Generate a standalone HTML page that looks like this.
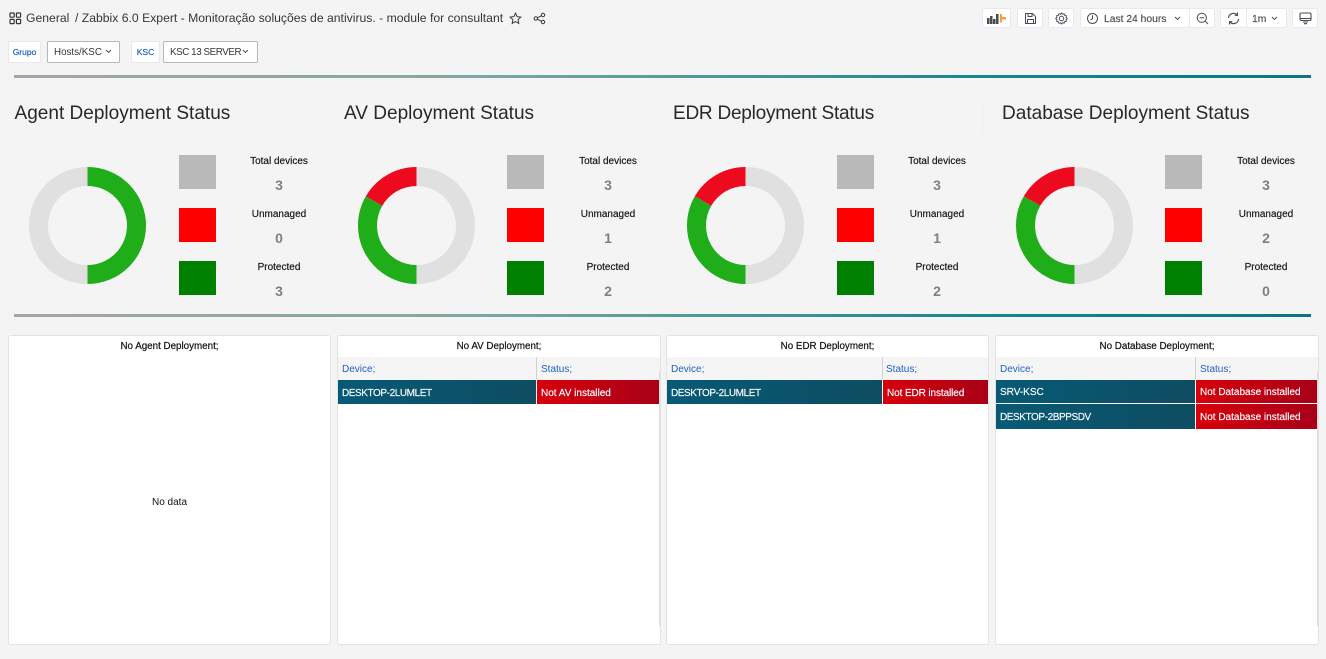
<!DOCTYPE html>
<html><head><meta charset="utf-8">
<style>
html,body{margin:0;padding:0;width:1326px;height:659px;overflow:hidden;background:#f4f4f4;font-family:"Liberation Sans",sans-serif;color:#24292e}
.a{position:absolute;white-space:nowrap}
.c{position:absolute;white-space:nowrap;text-align:center;transform:translateX(-50%)}
.btn{position:absolute;top:8px;height:20px;background:#fff;border:1px solid #e8e9ea;box-sizing:border-box;border-radius:2px}
.line{position:absolute;left:14px;width:1297px;height:3px;background:linear-gradient(90deg,#a6a6a6 0%,#7fa8a2 35%,#16858f 75%,#0a7588 100%)}
.title{position:absolute;top:102px;font-size:19.05px;line-height:24px;color:#24292e;white-space:nowrap}
.sq{position:absolute;width:37px;height:34px}
.lb{font-size:10px;line-height:12px;color:#111;-webkit-text-stroke:.15px #111}
.vl{font-size:14px;line-height:16px;font-weight:bold;color:#808080}
.card{position:absolute;top:335px;height:310px;background:#fff;border:1px solid #e2e3e4;box-sizing:border-box;border-radius:3px;overflow:hidden}
.ct{position:absolute;left:0;right:0;top:4px;text-align:center;font-size:9.8px;line-height:12px;color:#111;-webkit-text-stroke:.2px #111;padding-top:1px}
.hd{position:absolute;left:0;right:0;top:21px;height:23px;background:#f5f5f5}
.hdt{position:absolute;top:28px;font-size:10px;line-height:12px;color:#1f60c4}
.d{position:absolute;background:linear-gradient(90deg,#075a76,#0e4c61)}
.s{position:absolute;background:linear-gradient(90deg,#d6000c,#a80018)}
.t{position:absolute;font-size:10px;line-height:12px;color:#fff;white-space:nowrap;-webkit-text-stroke:.15px #fff}
.n{letter-spacing:-.42px}
.chip{position:absolute;top:41px;height:22px;background:#fff;border:1px solid #e8e9ea;box-sizing:border-box;text-align:center;font-size:8.5px;line-height:21px;color:#1f60c4;-webkit-text-stroke:.2px #1f60c4}
.sel{position:absolute;top:41px;height:22px;background:#fff;border:1px solid #b5b7ba;box-sizing:border-box;border-radius:2px;font-size:9.8px;line-height:21px;color:#33373b;padding-left:6px;white-space:nowrap}
.sb{position:absolute;width:1px;background:#dcdcdc}
</style></head><body>

<svg class="a" style="left:9px;top:12px" width="13" height="13" viewBox="0 0 13 13" fill="none" stroke="#33373b" stroke-width="1.2"><rect x="1" y="1" width="4.2" height="4.2" rx=".6"/><rect x="7.4" y="1" width="4.2" height="4.2" rx=".6"/><rect x="1" y="7.4" width="4.2" height="4.2" rx=".6"/><rect x="7.4" y="7.4" width="4.2" height="4.2" rx=".6"/></svg>
<div class="a" style="left:26px;top:11px;font-size:12.2px;line-height:15px;color:#33373b">General</div>
<div class="a" style="left:75px;top:11px;font-size:12.2px;line-height:15px;color:#33373b">/ Zabbix 6.0 Expert - Monitoração soluções de antivirus. - module for consultant</div>
<svg class="a" style="left:509px;top:12px" width="13" height="13" viewBox="0 0 13 13" fill="none" stroke="#33373b" stroke-width="1"><path d="M6.5 1.2l1.6 3.4 3.7.5-2.7 2.6.7 3.7-3.3-1.8-3.3 1.8.7-3.7L1.2 5.1l3.7-.5z"/></svg>
<svg class="a" style="left:533px;top:12px" width="13" height="13" viewBox="0 0 13 13" fill="none" stroke="#33373b" stroke-width="1"><circle cx="2.8" cy="6.5" r="1.7"/><circle cx="10" cy="3" r="1.7"/><circle cx="10" cy="10" r="1.7"/><path d="M4.4 5.7L8.4 3.8M4.4 7.3l4 1.9"/></svg>

<div class="chip" style="left:8px;width:33px">Grupo</div>
<div class="sel" style="left:47px;width:73px">Hosts/KSC</div>
<svg class="a" style="left:105px;top:49px" width="7" height="5" fill="none" stroke="#44484c" stroke-width=".9"><path d="M1 1l2.5 2.5L6 1"/></svg>
<div class="chip" style="left:131px;width:29px">KSC</div>
<div class="sel" style="left:163px;width:95px;letter-spacing:-.42px">KSC 13 SERVER</div>
<svg class="a" style="left:242px;top:49px" width="7" height="5" fill="none" stroke="#44484c" stroke-width=".9"><path d="M1 1l2.5 2.5L6 1"/></svg>

<div class="btn" style="left:982px;width:29px"></div>
<svg class="a" style="left:987px;top:12px" width="20" height="13"><g fill="#464c54"><rect x="0" y="6" width="2.5" height="6"/><rect x="3" y="4" width="2.5" height="8"/><rect x="6" y="7" width="2.5" height="5"/><rect x="9" y="2" width="2.5" height="10"/></g><path d="M13 2h2v3h4v2.500h-4v3h-2z" fill="#f5a142"/></svg>
<div class="btn" style="left:1017px;width:26px"></div>
<svg class="a" style="left:1024px;top:12px" width="13" height="13" fill="none" stroke="#464c54" stroke-width="1"><path d="M1.500 1.500h7l3 3v7h-10z"/><path d="M4 1.500v3h4v-3M3.500 11.500v-4h6v4"/></svg>
<div class="btn" style="left:1048px;width:26px"></div>
<svg class="a" style="left:1055px;top:12px" width="13" height="13" fill="none" stroke="#464c54" stroke-width="1"><circle cx="6.500" cy="6.500" r="2.200"/><path d="M6.500 1l1 1.200 1.600-.4.600 1.500 1.600.4-.2 1.600 1.200 1.200-1.200 1.200.2 1.600-1.600.4-.6 1.500-1.600-.4-1 1.200-1-1.200-1.600.4-.6-1.500-1.600-.4.2-1.600L.7 6.500l1.200-1.200-.2-1.600 1.600-.4.6-1.500 1.600.4z"/></svg>
<div class="btn" style="left:1080px;width:110px"></div>
<svg class="a" style="left:1086px;top:12px" width="13" height="13" fill="none" stroke="#464c54" stroke-width="1"><circle cx="6.500" cy="6.500" r="5"/><path d="M6.500 3.200v3.500l-2 1.300"/></svg>
<div class="a" style="left:1104px;top:13px;font-size:10.3px;line-height:13px;color:#464c54;-webkit-text-stroke:.15px #464c54">Last 24 hours</div>
<svg class="a" style="left:1174px;top:16px" width="7" height="5" fill="none" stroke="#464c54" stroke-width=".9"><path d="M1 1l2.500 2.500L6 1"/></svg>
<div class="btn" style="left:1189px;width:26px"></div>
<svg class="a" style="left:1196px;top:12px" width="13" height="13" fill="none" stroke="#464c54" stroke-width="1"><circle cx="5.800" cy="5.800" r="4.600"/><path d="M3.600 5.800h4.400M9.200 9.200l2.800 2.800"/></svg>
<div class="btn" style="left:1220px;width:27px"></div>
<svg class="a" style="left:1227px;top:12px" width="13" height="13" fill="none" stroke="#464c54" stroke-width="1.100"><path d="M1.500 6A5 5 0 0 1 10 2.800M11.500 7A5 5 0 0 1 3 10.200"/><path d="M10.500 .5v2.800H7.700M2.500 12.500V9.700h2.800"/></svg>
<div class="btn" style="left:1246px;width:41px"></div>
<div class="a" style="left:1252px;top:13px;font-size:10.3px;line-height:13px;color:#464c54;-webkit-text-stroke:.15px #464c54">1m</div>
<svg class="a" style="left:1271px;top:16px" width="7" height="5" fill="none" stroke="#464c54" stroke-width=".9"><path d="M1 1l2.500 2.500L6 1"/></svg>
<div class="btn" style="left:1292px;width:26px"></div>
<svg class="a" style="left:1299px;top:12px" width="13" height="13" fill="none" stroke="#464c54" stroke-width="1.100"><rect x="1" y="1" width="11" height="7.500" rx="1.200"/><path d="M1.200 6.500h10.600M4 10h5M5 11.700h3"/></svg>

<div class="line" style="top:75px"></div>
<div class="line" style="top:314px"></div>
<div class="a" style="left:982px;top:104px;width:1px;height:30px;background:#ebecec"></div>

<div class="title" style="left:14.5px">Agent Deployment Status</div>
<div class="title" style="left:344px">AV Deployment Status</div>
<div class="title" style="left:673px;letter-spacing:-.25px">EDR Deployment Status</div>
<div class="title" style="left:1002px">Database Deployment Status</div>

<svg class="a" style="left:0;top:0" width="1326" height="659" fill="none" stroke-width="19">
<g transform="translate(87.5,225.5)"><path d="M0 49A49 49 0 0 1 0 -49" stroke="#e0e0e0"/><path d="M0 -49A49 49 0 0 1 0 49" stroke="#1fad19"/></g>
<g transform="translate(416.5,225.5)"><path d="M0 -49A49 49 0 0 1 0 49" stroke="#e0e0e0"/><path d="M0 49A49 49 0 0 1 -42.44 -24.5" stroke="#1fad19"/><path d="M-42.44 -24.5A49 49 0 0 1 0 -49" stroke="#ee0a1e"/></g>
<g transform="translate(745.5,225.5)"><path d="M0 -49A49 49 0 0 1 0 49" stroke="#e0e0e0"/><path d="M0 49A49 49 0 0 1 -42.44 -24.5" stroke="#1fad19"/><path d="M-42.44 -24.5A49 49 0 0 1 0 -49" stroke="#ee0a1e"/></g>
<g transform="translate(1074.5,225.5)"><path d="M0 -49A49 49 0 0 1 0 49" stroke="#e0e0e0"/><path d="M0 49A49 49 0 0 1 -42.44 -24.5" stroke="#1fad19"/><path d="M-42.44 -24.5A49 49 0 0 1 0 -49" stroke="#ee0a1e"/></g>
</svg>

<div class="sq" style="left:179px;top:155px;background:#b9b9b9"></div>
<div class="sq" style="left:179px;top:208px;background:#ff0000"></div>
<div class="sq" style="left:179px;top:261px;background:#008000"></div>
<div class="c lb" style="left:279px;top:156px">Total devices</div><div class="c vl" style="left:279px;top:177px">3</div>
<div class="c lb" style="left:279px;top:209px">Unmanaged</div><div class="c vl" style="left:279px;top:230px">0</div>
<div class="c lb" style="left:279px;top:262px">Protected</div><div class="c vl" style="left:279px;top:283px">3</div>

<div class="sq" style="left:507px;top:155px;background:#b9b9b9"></div>
<div class="sq" style="left:507px;top:208px;background:#ff0000"></div>
<div class="sq" style="left:507px;top:261px;background:#008000"></div>
<div class="c lb" style="left:608px;top:156px">Total devices</div><div class="c vl" style="left:608px;top:177px">3</div>
<div class="c lb" style="left:608px;top:209px">Unmanaged</div><div class="c vl" style="left:608px;top:230px">1</div>
<div class="c lb" style="left:608px;top:262px">Protected</div><div class="c vl" style="left:608px;top:283px">2</div>

<div class="sq" style="left:837px;top:155px;background:#b9b9b9"></div>
<div class="sq" style="left:837px;top:208px;background:#ff0000"></div>
<div class="sq" style="left:837px;top:261px;background:#008000"></div>
<div class="c lb" style="left:937px;top:156px">Total devices</div><div class="c vl" style="left:937px;top:177px">3</div>
<div class="c lb" style="left:937px;top:209px">Unmanaged</div><div class="c vl" style="left:937px;top:230px">1</div>
<div class="c lb" style="left:937px;top:262px">Protected</div><div class="c vl" style="left:937px;top:283px">2</div>

<div class="sq" style="left:1165px;top:155px;background:#b9b9b9"></div>
<div class="sq" style="left:1165px;top:208px;background:#ff0000"></div>
<div class="sq" style="left:1165px;top:261px;background:#008000"></div>
<div class="c lb" style="left:1266px;top:156px">Total devices</div><div class="c vl" style="left:1266px;top:177px">3</div>
<div class="c lb" style="left:1266px;top:209px">Unmanaged</div><div class="c vl" style="left:1266px;top:230px">2</div>
<div class="c lb" style="left:1266px;top:262px">Protected</div><div class="c vl" style="left:1266px;top:283px">0</div>

<div class="card" style="left:8px;width:323px">
  <div class="ct">No Agent Deployment;</div>
  <div class="a" style="left:0;right:0;top:161px;text-align:center;font-size:10px;line-height:12px;color:#111">No data</div>
</div>

<div class="card" style="left:337px;width:324px">
  <div class="ct">No AV Deployment;</div>
  <div class="hd"></div>
  <div class="a" style="left:198px;top:21px;width:1px;height:23px;background:#d0d0d0"></div>
  <div class="hdt" style="left:4px">Device;</div><div class="hdt" style="left:203px">Status;</div>
  <div class="d" style="left:0;top:44px;width:198px;height:24px"></div>
  <div class="s" style="left:199px;top:44px;width:122px;height:24px"></div>
  <div class="sb" style="left:321px;top:36px;height:254px"></div>
  <div class="t n" style="left:4px;top:52px">DESKTOP-2LUMLET</div><div class="t" style="left:203px;top:52px">Not AV installed</div>
</div>

<div class="card" style="left:666px;width:323px">
  <div class="ct">No EDR Deployment;</div>
  <div class="hd"></div>
  <div class="a" style="left:215px;top:21px;width:1px;height:23px;background:#d0d0d0"></div>
  <div class="hdt" style="left:4px">Device;</div><div class="hdt" style="left:219px">Status;</div>
  <div class="d" style="left:0;top:44px;width:215px;height:24px"></div>
  <div class="s" style="left:216px;top:44px;width:105px;height:24px"></div>
  <div class="sb" style="left:321px;top:36px;height:254px"></div>
  <div class="t n" style="left:4px;top:52px">DESKTOP-2LUMLET</div><div class="t" style="left:220px;top:52px;letter-spacing:-.1px">Not EDR installed</div>
</div>

<div class="card" style="left:995px;width:324px">
  <div class="ct">No Database Deployment;</div>
  <div class="hd"></div>
  <div class="a" style="left:199px;top:21px;width:1px;height:23px;background:#d0d0d0"></div>
  <div class="hdt" style="left:4px">Device;</div><div class="hdt" style="left:204px">Status;</div>
  <div class="d" style="left:0;top:44px;width:199px;height:23px"></div>
  <div class="s" style="left:200px;top:44px;width:121px;height:23px"></div>
  <div class="d" style="left:0;top:68px;width:199px;height:25px"></div>
  <div class="s" style="left:200px;top:68px;width:121px;height:25px"></div>
  <div class="sb" style="left:321px;top:36px;height:254px"></div>
  <div class="t n" style="left:4px;top:51px;letter-spacing:0">SRV-KSC</div><div class="t" style="left:204px;top:51px">Not Database installed</div>
  <div class="t n" style="left:4px;top:76px">DESKTOP-2BPPSDV</div><div class="t" style="left:204px;top:76px">Not Database installed</div>
</div>
</body></html>
